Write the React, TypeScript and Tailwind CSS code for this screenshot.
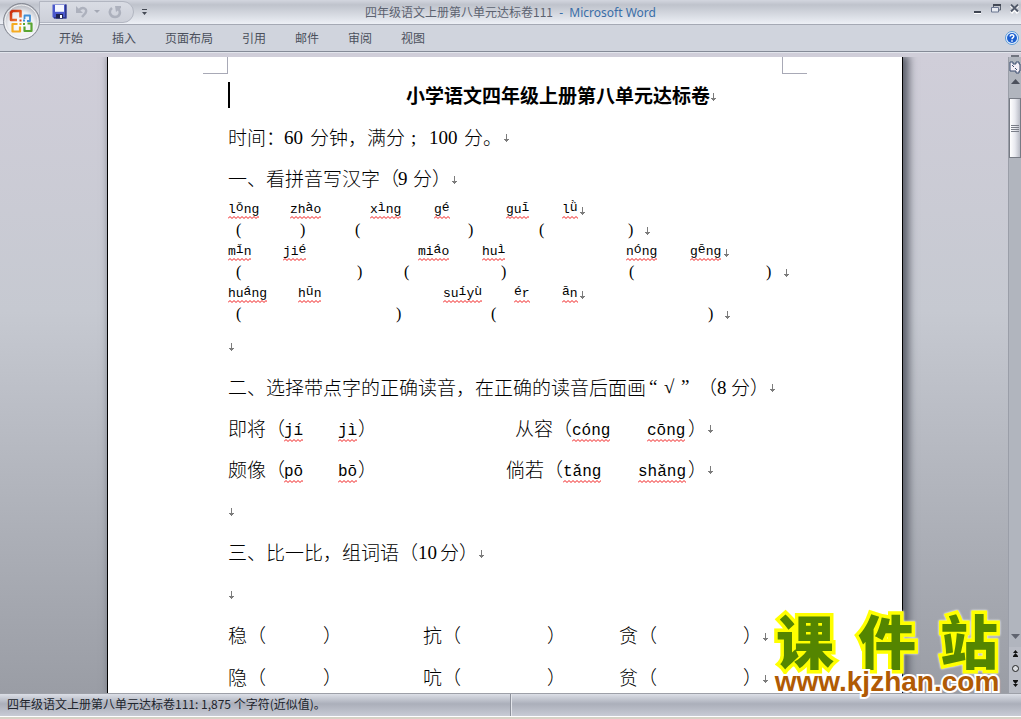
import React from 'react';

type Piece = {
  text: string;
  width: string;
  wavy?: boolean;
};

const tabs = ['开始', '插入', '页面布局', '引用', '邮件', '审阅', '视图'];

const pinyinLines: { words: Piece[]; blanks: Piece[] }[] = [
  {
    words: [
      { text: 'lǒng', width: 'w-[62px]' },
      { text: 'zhào', width: 'w-[80px]' },
      { text: 'xìng', width: 'w-[64px]' },
      { text: 'gé', width: 'w-[72px]' },
      { text: 'guī', width: 'w-[56px]' },
      { text: 'lǜ', width: 'w-[17px]' },
    ],
    blanks: [
      { text: '', width: 'w-2' },
      { text: '(', width: 'w-[64px]' },
      { text: ')', width: 'w-[55px]' },
      { text: '(', width: 'w-[113px]' },
      { text: ')', width: 'w-[71px]' },
      { text: '(', width: 'w-[89px]' },
      { text: ')', width: 'w-[16px]' },
    ],
  },
  {
    words: [
      { text: 'mǐn', width: 'w-[55px]' },
      { text: 'jié', width: 'w-[135px]' },
      { text: 'miáo', width: 'w-[64px]' },
      { text: 'huì', width: 'w-[144px]' },
      { text: 'nóng', width: 'w-[64px]' },
      { text: 'gēng', width: 'w-[33px]' },
    ],
    blanks: [
      { text: '', width: 'w-2' },
      { text: '(', width: 'w-[121px]' },
      { text: ')', width: 'w-[47px]' },
      { text: '(', width: 'w-[97px]' },
      { text: ')', width: 'w-[128px]' },
      { text: '(', width: 'w-[137px]' },
      { text: ')', width: 'w-[17px]' },
    ],
  },
  {
    words: [
      { text: 'huáng', width: 'w-[70px]' },
      { text: 'hūn', width: 'w-[145px]' },
      { text: 'suíyù', width: 'w-[71px]' },
      { text: 'ér', width: 'w-[48px]' },
      { text: 'ān', width: 'w-[17px]' },
    ],
    blanks: [
      { text: '', width: 'w-2' },
      { text: '(', width: 'w-[160px]' },
      { text: ')', width: 'w-[95px]' },
      { text: '(', width: 'w-[217px]' },
      { text: ')', width: 'w-[16px]' },
    ],
  },
];

const choiceLines: Piece[][] = [
  [
    { text: '即将（', width: 'w-[56px]' },
    { text: 'jí', width: 'w-[54px]', wavy: true },
    { text: 'jì', width: 'w-[20px]', wavy: true },
    { text: '）', width: 'w-[157px]' },
    { text: '从容（', width: 'w-[57px]' },
    { text: 'cóng', width: 'w-[75px]', wavy: true },
    { text: 'cōng', width: 'w-[41px]', wavy: true },
    { text: '）', width: 'w-[19px]' },
  ],
  [
    { text: '颇像（', width: 'w-[56px]' },
    { text: 'pō', width: 'w-[54px]', wavy: true },
    { text: 'bō', width: 'w-[20px]', wavy: true },
    { text: '）', width: 'w-[148px]' },
    { text: '倘若（', width: 'w-[57px]' },
    { text: 'tǎng', width: 'w-[75px]', wavy: true },
    { text: 'shǎng', width: 'w-[50px]', wavy: true },
    { text: '）', width: 'w-[19px]' },
  ],
];

const compareLines = [
  ['稳', '抗', '贪'],
  ['隐', '吭', '贫'],
];

const gapWidths = ['w-[57px]', 'w-[86px]', 'w-[86px]'];
const columnWidths = ['w-[195px]', 'w-[196px]', 'w-[143px]'];

const zigzag = 'M0 2.5' + 'l2 -2l2 2'.repeat(16);

const Mark: React.FC = () => (
  <svg className="mt-1 h-[9px] w-[7px] shrink-0" viewBox="0 0 7 9">
    <path d="M3 0h1v5h2v1h-1v1h-1v1h-1v-1h-1v-1h-1v-1h2z" fill="#7c7c7c" />
  </svg>
);

const Wavy: React.FC = () => (
  <svg className="absolute inset-x-0 -bottom-px h-[3px] w-full overflow-hidden">
    <path d={zigzag} fill="none" stroke="#f01818" strokeWidth="1" />
  </svg>
);

// Toned vowels are drawn a little higher than the letters round them
const PinyinWord: React.FC<{ word: string }> = ({ word }) => (
  <span className="relative inline-block h-4 font-['Liberation_Mono'] text-[13px] leading-4">
    {word.split(/([^a-z])/).map((part, i) =>
      i % 2 === 1 ? (
        <span key={i} className="align-[2px] leading-3">
          {part}
        </span>
      ) : (
        part
      ),
    )}
    <Wavy />
  </span>
);

const Digits: React.FC<{ children: React.ReactNode }> = ({ children }) => (
  <span className="font-['Liberation_Serif']">{children}</span>
);

const TitleBar: React.FC = () => (
  <header className="relative grid h-[25px] shrink-0 grid-cols-[1fr_auto_1fr] items-center border-b border-[#a5a9b4] bg-linear-to-b from-[#d3d6df] via-[#bfc3cc] via-20% to-[#edf0f6]">
    <div className="flex h-full items-center gap-2 pl-[39px]">
      <div className="mb-px flex h-[22px] w-[95px] items-center rounded-r-full border border-[#b2b6c1] bg-linear-to-b from-[#d9dce4] to-[#cdd0d9] pl-3">
        <button aria-label="保存">
          <svg className="size-[15px]" viewBox="0 0 15 15">
            <path d="M.5 .5h14v14H2l-1.500-1.500z" fill="#4a58cc" />
            <path d="M13 .5h1.500v14H2V13h11z" fill="#2f3787" />
            <path d="M3 1h9v7H3z" fill="#f4f6ff" />
            <path d="M3 7h9v1H3z" fill="#cfd6f4" />
            <path d="M4 10h7v4.500H4z" fill="#1f2450" />
            <path d="M8 11h2v3H8z" fill="#fff" />
          </svg>
        </button>
        <button aria-label="撤消" className="ml-2">
          <svg className="h-[14px] w-[13px]" viewBox="0 0 13 14">
            <path
              d="M4 5C8 1 13 4 10.500 8L7 12"
              fill="none"
              stroke="#adb1bd"
              strokeWidth="2.4"
            />
            <path d="M1 1v7h7z" fill="#adb1bd" />
          </svg>
        </button>
        <svg className="ml-1.5 h-[3px] w-[6px]" viewBox="0 0 6 3">
          <path d="M0 0h6L3 3z" fill="#a4a8b4" />
        </svg>
        <button aria-label="重复" className="ml-2">
          <svg className="size-[14px]" viewBox="0 0 14 14">
            <path
              d="M4 3C0 6 2 12 7 12c5 0 6-5 3.500-8"
              fill="none"
              stroke="#adb1bd"
              strokeWidth="2.6"
            />
            <path d="M7 1h6v2L8 7z" fill="#adb1bd" />
          </svg>
        </button>
      </div>
      <button aria-label="自定义快速访问工具栏">
        <svg className="h-[6px] w-[5px]" viewBox="0 0 5 6">
          <path d="M0 0h5v1H0zM0 3h5L2.500 6z" fill="#454a55" />
        </svg>
      </button>
    </div>
    <h1 className="text-[12px] leading-4 whitespace-pre text-[#5c6270]">
      四年级语文上册第八单元达标卷111
      <span className="font-['Noto_Sans'] text-[12px] text-[#3a6ea8]">
        {'  -  Microsoft Word'}
      </span>
    </h1>
    <div className="flex items-start justify-end gap-[9px] pr-px pb-[6px]">
      <button aria-label="最小化">
        <svg className="size-[10px]" viewBox="0 0 10 10">
          <path d="M2 9h7v1H2z" fill="#fff" />
          <path d="M2 7h7v2H2z" fill="#3f4552" />
        </svg>
      </button>
      <button aria-label="还原">
        <svg className="size-[10px]" viewBox="0 0 10 10">
          <path d="M2.500 3V.5h7V6H8" fill="none" stroke="#59606e" />
          <path d="M2 0h8v2H2z" fill="#434956" />
          <path d="M.5 3.500h7V8h-7z" fill="#e8ebf2" stroke="#6b7690" />
        </svg>
      </button>
      <button aria-label="关闭">
        <svg className="size-[10px]" viewBox="0 0 10 10">
          <path d="M1 1l7 8M8 1L1 9" stroke="#fff" strokeWidth="3" />
          <path d="M1 .5l7 7M8 .5l-7 7" stroke="#535b6c" strokeWidth="2" />
        </svg>
      </button>
    </div>
    <button
      aria-label="Office 按钮"
      className="absolute top-[2px] left-[2px] z-10"
    >
      <svg className="size-[39px]" viewBox="0 0 39 39">
        <defs>
          <radialGradient id="orb" cx="50%" cy="60%" r="60%">
            <stop offset="0" stopColor="#ffffff" />
            <stop offset=".6" stopColor="#eceef2" />
            <stop offset="1" stopColor="#a8abb4" />
          </radialGradient>
          <linearGradient id="red" x1="0" y1="0" x2="1" y2="1">
            <stop offset="0" stopColor="#c92a0c" />
            <stop offset="1" stopColor="#f2803a" />
          </linearGradient>
        </defs>
        <circle
          cx="19.500"
          cy="19.500"
          r="18"
          fill="url(#orb)"
          stroke="#858993"
        />
        <circle
          cx="19.500"
          cy="19.500"
          r="16.500"
          fill="none"
          stroke="#fff"
          strokeOpacity=".8"
        />
        <g fill="none" strokeLinejoin="round">
          <path
            d="M15 18H9v-7.500L10.500 9h8v6.500"
            stroke="url(#red)"
            strokeWidth="2.600"
          />
          <path
            d="M22.500 17v-3.500h5.500v5.500h-3"
            stroke="#3f8fd6"
            strokeWidth="1.800"
          />
          <path
            d="M15.500 22h-5v7.500h7.500v-5"
            stroke="#f5ab22"
            strokeWidth="2.200"
          />
          <path
            d="M25.500 21.500h4v7.500h-7v-4.500"
            stroke="#5aa532"
            strokeWidth="2.200"
          />
        </g>
        <path d="M17.500 17.500h2v2h-2z" fill="#d9431a" />
        <path d="M21 17.500h2v2h-2z" fill="#3f8fd6" />
        <path d="M17.500 21h2v2h-2z" fill="#f2a51d" />
        <path d="M21 21h2v2h-2z" fill="#5aa532" />
      </svg>
    </button>
  </header>
);

const RibbonTabs: React.FC = () => (
  <nav className="flex h-[27px] shrink-0 items-center border-b border-[#858b97] bg-[#d0d4dd] pr-[2px] pl-[59px]">
    <div className="flex flex-1 gap-[29px]">
      {tabs.map((tab) => (
        <button key={tab} className="text-[12px] leading-4 text-[#4b505c]">
          {tab}
        </button>
      ))}
    </div>
    <button aria-label="帮助">
      <svg className="size-[14px]" viewBox="0 0 14 14">
        <circle cx="7" cy="7" r="6.500" fill="#e8f3ff" stroke="#5c9ad6" />
        <circle cx="7" cy="7" r="5" fill="#1c5fd0" />
        <path
          d="M5.200 5.500c0-2.400 3.800-2.200 3.600 0C8.700 6.700 7 6.700 7 8.200M7 9.300v1.500"
          fill="none"
          stroke="#fff"
          strokeWidth="1.500"
        />
      </svg>
    </button>
  </nav>
);

const ScrollBar: React.FC = () => (
  <aside className="flex w-[13px] shrink-0 flex-col items-center border-l border-[#9a9ea8] bg-[#b1b5be]">
    <div className="mt-[-2px] h-[2px] w-2 shrink-0 bg-[#70747f]" />
    <button aria-label="标尺" className="mt-1 shrink-0">
      <svg className="h-[13px] w-3" viewBox="0 0 12 13">
        <path
          d="M1 1h3v2h3V1h3v2h1v7h-1v2H7v-2H1z"
          fill="#f4eef6"
          stroke="#3d4f70"
        />
        <path d="M3 4l2 2M6 7l2 2" stroke="#3d4f70" />
      </svg>
    </button>
    <button aria-label="向上滚动" className="mt-[5px] shrink-0">
      <svg className="h-[5px] w-[9px]" viewBox="0 0 9 5">
        <path d="M0 5h9L4.500 0z" fill="#4c505c" />
      </svg>
    </button>
    <div className="mt-[14px] flex h-[60px] w-full shrink-0 flex-col items-center justify-center gap-px border border-[#777b85] bg-linear-to-r from-white via-[#e8e9ef] to-[#b9bcc6]">
      <div className="h-px w-2 bg-[#7a7e88]" />
      <div className="h-px w-2 bg-[#7a7e88]" />
      <div className="h-px w-2 bg-[#7a7e88]" />
      <div className="h-px w-2 bg-[#7a7e88]" />
    </div>
    <div className="flex-1" />
    <button aria-label="向下滚动" className="mb-[8px]">
      <svg className="h-[5px] w-[9px]" viewBox="0 0 9 5">
        <path d="M0 0h9L4.500 5z" fill="#60646f" />
      </svg>
    </button>
    <div className="flex w-full flex-col items-center gap-[8px] bg-[#b9bcc5] pt-[3px] pb-[6px]">
      <button aria-label="前一页" className="flex">
        <svg className="h-[7px] w-[5px]" viewBox="0 0 5 7">
          <path d="M2.500 0L5 3H0zM2.500 3L5 6H0z" fill="#111" />
          <path d="M0 6h5v1H0z" fill="#111" />
        </svg>
      </button>
      <button aria-label="选择浏览对象" className="flex">
        <svg className="size-[7px]" viewBox="0 0 7 7">
          <circle cx="3.500" cy="3.500" r="3" fill="#d9dbe0" stroke="#222" />
        </svg>
      </button>
      <button aria-label="下一页" className="flex">
        <svg className="h-[7px] w-[5px]" viewBox="0 0 5 7">
          <path d="M0 0h5v1H0zM0 1h5L2.500 4zM0 4h5L2.500 7z" fill="#111" />
        </svg>
      </button>
    </div>
  </aside>
);

const DocumentPage: React.FC = () => (
  <main className="relative mx-auto w-[796px] overflow-hidden border-x border-black bg-white pt-[17px] pl-[120px] text-[19px] leading-6 font-light whitespace-nowrap text-black shadow-[4px_0_8px_2px_#5d616c]">
    <div className="absolute top-0 left-[95px] h-[17px] w-[25px] border-r border-b border-[#a8a9b6]" />
    <div className="absolute top-0 right-[95px] h-[17px] w-[25px] border-b border-l border-[#a8a9b6]" />

    <div className="flex h-[42px] items-center">
      <div className="h-[26px] w-[2px] bg-black" />
      <h2 className="ml-[176px] font-bold">
        小学语文四年级上册第八单元达标卷
      </h2>
      <Mark />
    </div>
    <p className="flex h-[41px] items-center">
      <span className="w-[56px]">时间：</span>
      <span className="w-[26px]">
        <Digits>60</Digits>
      </span>
      <span className="w-[101px]">分钟，满分</span>
      <span className="w-[18px]">
        <Digits>;</Digits>
      </span>
      <span className="w-[35px]">
        <Digits>100</Digits>
      </span>
      <span className="w-[39px]">分。</span>
      <Mark />
    </p>
    <p className="flex h-[42px] items-center">
      <span className="w-[170px]">一、看拼音写汉字（</span>
      <span className="w-[15px]">
        <Digits>9</Digits>
      </span>
      <span className="w-[38px]">分）</span>
      <Mark />
    </p>

    {pinyinLines.map((line, i) => (
      <React.Fragment key={i}>
        <p className="flex h-[21px] items-center">
          {line.words.map((item) => (
            <span key={item.text} className={`flex ${item.width}`}>
              <PinyinWord word={item.text} />
            </span>
          ))}
          <Mark />
        </p>
        <p className="flex h-[21px] items-center pb-[2px] font-['Liberation_Serif'] text-[16px] leading-4">
          {line.blanks.map((item, j) => (
            <span key={j} className={item.width}>
              {item.text}
            </span>
          ))}
          <Mark />
        </p>
      </React.Fragment>
    ))}

    <p className="flex h-[41px] items-center">
      <Mark />
    </p>
    <p className="flex h-[41px] items-center">
      <span className="w-[421px]">
        二、选择带点字的正确读音，在正确的读音后面画
      </span>
      <span className="w-[15px] font-['Liberation_Serif']">“</span>
      <span className="w-[17px] font-['Liberation_Serif']">√</span>
      <span className="w-[17px] font-['Liberation_Serif']">”</span>
      <span className="w-[19px]">（</span>
      <span className="w-[14px]">
        <Digits>8</Digits>
      </span>
      <span className="w-[38px]">分）</span>
      <Mark />
    </p>
    {choiceLines.map((line, i) => (
      <p key={i} className="flex h-[41px] items-center">
        {line.map((item, j) => (
          <span key={j} className={`shrink-0 ${item.width}`}>
            {item.wavy ? (
              <span className="relative inline-block font-['Liberation_Mono'] text-[16px] leading-5">
                {item.text}
                <Wavy />
              </span>
            ) : (
              item.text
            )}
          </span>
        ))}
        <Mark />
      </p>
    ))}

    <p className="flex h-[42px] items-center">
      <Mark />
    </p>
    <p className="flex h-[42px] items-center">
      <span className="w-[190px]">三、比一比，组词语（</span>
      <span className="w-[22px]">
        <Digits>10</Digits>
      </span>
      <span className="w-[38px]">分）</span>
      <Mark />
    </p>
    <p className="flex h-[41px] items-center">
      <Mark />
    </p>
    {compareLines.map((line) => (
      <p key={line[0]} className="flex h-[42px] items-center">
        {line.map((char, i) => (
          <span key={char} className={`flex ${columnWidths[i]}`}>
            {char}（<span className={gapWidths[i]} />）
          </span>
        ))}
        <Mark />
      </p>
    ))}
  </main>
);

const Watermark: React.FC = () => (
  <div className="absolute right-[23px] bottom-[25px] w-[222px] font-bold">
    <div className="flex justify-between text-[58px] leading-[50px] font-black text-[#548500] drop-shadow-[0_0_1px_#fff] [-webkit-text-stroke:7px_#ffff00] [paint-order:stroke_fill]">
      <span>课</span>
      <span>件</span>
      <span>站</span>
    </div>
    <div className="relative mt-1.5 flex justify-center font-['Liberation_Sans'] text-[28px] leading-6 text-[#b05a04] [-webkit-text-stroke:4px_#fff] [paint-order:stroke_fill]">
      www.kjzhan.com
    </div>
  </div>
);

const App: React.FC = () => {
  return (
    <div
      lang="zh-CN"
      className="relative flex h-screen flex-col overflow-hidden bg-[#d0ced9] font-['Noto_Sans_CJK_SC',sans-serif]"
    >
      <TitleBar />
      <RibbonTabs />
      <div className="h-[5px] shrink-0 border-t border-[#e2e5ec] bg-[#d0ced9]" />
      <div className="flex min-h-0 flex-1 bg-linear-to-b from-[#d0ced9] via-[#c6c9d1] via-40% to-[#9a9da5]">
        <div className="flex min-w-0 flex-1 overflow-hidden pl-[2px]">
          <DocumentPage />
        </div>
        <ScrollBar />
      </div>
      <footer className="flex h-[23px] shrink-0 items-center border-t border-[#9da0a8] bg-linear-to-b from-[#dcdfe7] via-[#abafba] via-45% to-[#c8cbd5] text-[12px] text-[#20242c]">
        <div className="flex h-full w-1/2 items-center border-r border-[#8d919b] pb-[2px] pl-[7px]">
          四年级语文上册第八单元达标卷111: 1,875 个字符(近似值)。
        </div>
        <div className="h-full w-1/2 border-l border-[#e4e6ec]" />
      </footer>
      <div className="h-[3px] shrink-0 border-t border-white bg-[#d6d2c6]" />
      <Watermark />
    </div>
  );
};

export default App;
